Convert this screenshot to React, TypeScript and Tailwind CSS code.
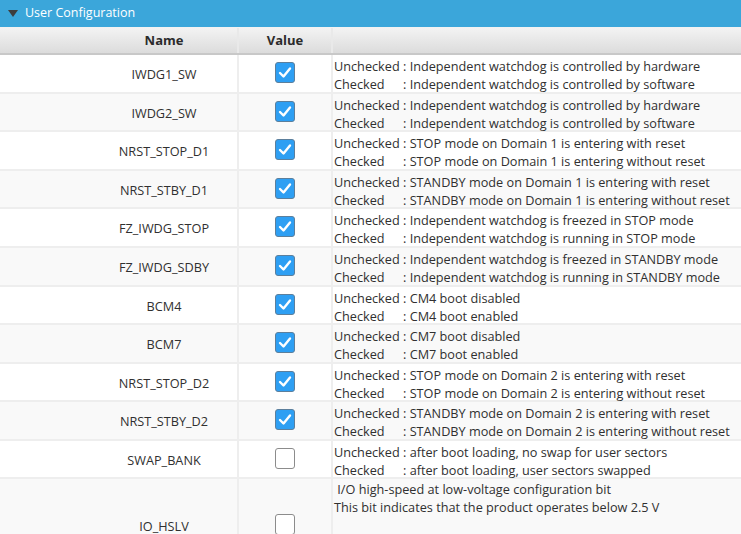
import React from "react";

type Row = { name: string; checked: boolean; u: string; c: string };

const rows: Row[] = [
  { name: "IWDG1_SW", checked: true, u: "Independent watchdog is controlled by hardware", c: "Independent watchdog is controlled by software" },
  { name: "IWDG2_SW", checked: true, u: "Independent watchdog is controlled by hardware", c: "Independent watchdog is controlled by software" },
  { name: "NRST_STOP_D1", checked: true, u: "STOP mode on Domain 1 is entering with reset", c: "STOP mode on Domain 1 is entering without reset" },
  { name: "NRST_STBY_D1", checked: true, u: "STANDBY mode on Domain 1 is entering with reset", c: "STANDBY mode on Domain 1 is entering without reset" },
  { name: "FZ_IWDG_STOP", checked: true, u: "Independent watchdog is freezed in STOP mode", c: "Independent watchdog is running in STOP mode" },
  { name: "FZ_IWDG_SDBY", checked: true, u: "Independent watchdog is freezed in STANDBY mode", c: "Independent watchdog is running in STANDBY mode" },
  { name: "BCM4", checked: true, u: "CM4 boot disabled", c: "CM4 boot enabled" },
  { name: "BCM7", checked: true, u: "CM7 boot disabled", c: "CM7 boot enabled" },
  { name: "NRST_STOP_D2", checked: true, u: "STOP mode on Domain 2 is entering with reset", c: "STOP mode on Domain 2 is entering without reset" },
  { name: "NRST_STBY_D2", checked: true, u: "STANDBY mode on Domain 2 is entering with reset", c: "STANDBY mode on Domain 2 is entering without reset" },
  { name: "SWAP_BANK", checked: false, u: "after boot loading, no swap for user sectors", c: "after boot loading, user sectors swapped" },
];

const heights = [39, 38, 39, 38, 39, 39, 38, 39, 38, 39, 38];

function Box({ checked }: { checked: boolean }) {
  if (checked) {
    return (
      <div className="w-[20px] h-[21px] rounded-[3px] bg-[#2e9ff3] border border-[#5c7f9c] flex items-center justify-center">
        <svg width="14" height="13" viewBox="0 0 14 13">
          <path d="M2 7 L5.5 10.5 L12 2.5" fill="none" stroke="#ffffff" strokeWidth="2.4" strokeLinecap="round" strokeLinejoin="round" />
        </svg>
      </div>
    );
  }
  return <div className="w-[20px] h-[21px] rounded-[3px] bg-white border border-[#8c8c8c]" />;
}

export default function App() {
  return (
    <div className="w-[741px] h-[534px] overflow-hidden bg-white text-[#303030]" style={{ fontFamily: '"Open Sans", "Noto Sans", sans-serif' }}>
      <div className="h-[27px] bg-[#3ba6da] flex items-center pl-[8px]">
        <svg width="10" height="7" viewBox="0 0 10 7" className="mr-[7px]">
          <path d="M0 0 L10 0 L5 7 Z" fill="#3d3d3d" />
        </svg>
        <span className="text-white text-[12.5px] leading-none">User Configuration</span>
      </div>
      <div className="h-[1px] bg-[#f2f2f2]" />
      <div className="h-[27px] flex bg-gradient-to-b from-[#f3f3f3] to-[#dcdcdc] border-b-2 border-[#c8c8c8] font-bold text-[13px] text-[#2b2b2b]">
        <div className="w-[239px] border-r-2 border-[#e9e9e9] flex items-center justify-center pl-[91px]">Name</div>
        <div className="w-[94px] border-r-2 border-[#e9e9e9] flex items-center justify-center">Value</div>
        <div className="flex-1" />
      </div>
      {rows.map((r, i) => (
        <div
          key={r.name}
          className={`flex border-b-2 border-[#eeeeee] ${i % 2 === 0 ? "bg-white" : "bg-[#f9f9f9]"} ${heights[i] === 39 ? "h-[39px]" : "h-[38px]"}`}
        >
          <div className="w-[239px] border-r-2 border-[#eeeeee] flex items-center justify-center pl-[91px] pt-[3px] text-[12.7px]">{r.name}</div>
          <div className="w-[94px] border-r-2 border-[#eeeeee] flex items-center justify-center pb-[2px]">
            <Box checked={r.checked} />
          </div>
          <div className="flex-1 pl-[1px] pt-[2px] text-[12.7px] leading-[18px] whitespace-nowrap">
            <div>
              <span className="inline-block w-[69px]">Unchecked</span>: {r.u}
            </div>
            <div>
              <span className="inline-block w-[69px]">Checked</span>: {r.c}
            </div>
          </div>
        </div>
      ))}
      <div className="flex h-[92px] bg-[#f9f9f9]">
        <div className="w-[239px] border-r-2 border-[#eeeeee] flex items-center justify-center pl-[91px] pt-[3px] text-[12.7px]">IO_HSLV</div>
        <div className="w-[94px] border-r-2 border-[#eeeeee] flex items-center justify-center pb-[2px]">
          <Box checked={false} />
        </div>
        <div className="flex-1 pl-[1px] pt-[1px] text-[12.7px] leading-[18px] whitespace-nowrap">
          <div>&nbsp;I/O high-speed at low-voltage configuration bit</div>
          <div>This bit indicates that the product operates below 2.5 V</div>
        </div>
      </div>
    </div>
  );
}
